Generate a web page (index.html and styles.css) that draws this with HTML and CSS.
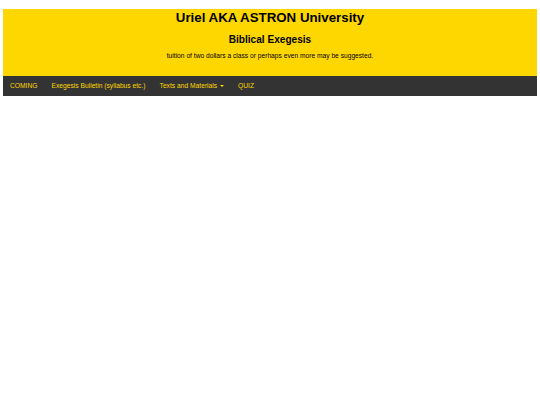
FILE: index.html
```html
<!DOCTYPE html>
<html>
<head>
<meta charset="utf-8">
<link rel="stylesheet" href="styles.css">
</head>
<body>
<header class="banner">
  <h1 class="title">Uriel AKA ASTRON University</h1>
  <h2 class="subtitle">Biblical Exegesis</h2>
  <p class="note">tuition of two dollars a class or perhaps even more may be suggested.</p>
</header>
<nav class="navbar">
  <a class="nav-link" href="#">COMING</a>
  <a class="nav-link" href="#">Exegesis Bulletin (syllabus etc.)</a>
  <a class="nav-link" href="#">Texts and Materials <span class="caret"></span></a>
  <a class="nav-link" href="#">QUIZ</a>
</nav>
</body>
</html>
```
FILE: styles.css
```css
html, body {
  margin: 0;
  padding: 0;
  background: #fff;
}
body {
  padding: 9px 3px 0 3px;
  font-family: "Liberation Sans", Arial, sans-serif;
}
.banner {
  background: #ffd700;
  text-align: center;
  padding: 0 0 16px 0;
  color: #000;
}
.title {
  margin: 0;
  font-size: 13.3px;
  line-height: 17px;
  font-weight: bold;
}
.subtitle {
  margin: 7px 0 0 0;
  font-size: 10.1px;
  line-height: 14px;
  font-weight: bold;
}
.note {
  margin: 5px 0 0 0;
  font-size: 6.66px;
  line-height: 8px;
}
.navbar {
  background: #333;
  height: 20px;
  display: flex;
  align-items: center;
  padding-left: 7px;
  gap: 14px;
}
.nav-link {
  color: #ffd700;
  text-decoration: none;
  font-size: 6.7px;
  line-height: 20px;
}
.caret {
  display: inline-block;
  width: 0;
  height: 0;
  border-left: 2.5px solid transparent;
  border-right: 2.5px solid transparent;
  border-top: 2.5px solid #ffd700;
  vertical-align: middle;
  margin-left: 1px;
}
```
